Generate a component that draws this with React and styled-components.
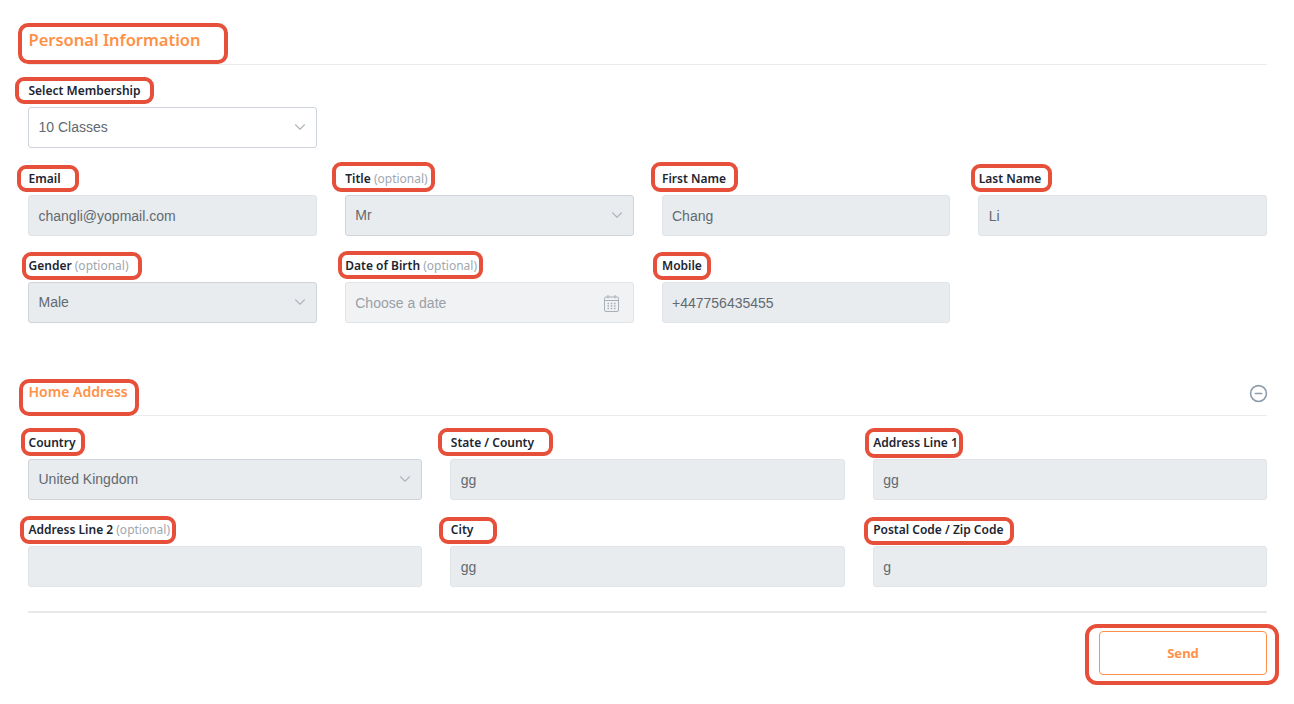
import styled, { createGlobalStyle } from "styled-components";
import { ChevronDown, CircleMinus } from "lucide-react";

const GlobalStyle = createGlobalStyle`
  html, body {
    margin: 0;
    padding: 0;
    background: #fff;
  }
`;

// review marks drawn over the form
const rings = [
  { x: 18, y: 23, w: 210, h: 41, r: 10 },
  { x: 15, y: 77, w: 139, h: 27 },
  { x: 17, y: 165, w: 62, h: 27 },
  { x: 332, y: 162, w: 103, h: 30 },
  { x: 651, y: 162, w: 87, h: 30 },
  { x: 971, y: 164, w: 81, h: 28 },
  { x: 22, y: 252, w: 120, h: 28 },
  { x: 338, y: 251, w: 145, h: 28 },
  { x: 653, y: 252, w: 58, h: 28 },
  { x: 19, y: 379, w: 120, h: 37, r: 10 },
  { x: 21, y: 428, w: 64, h: 28 },
  { x: 438, y: 428, w: 115, h: 28 },
  { x: 865, y: 428, w: 98, h: 30 },
  { x: 20, y: 516, w: 156, h: 28 },
  { x: 439, y: 517, w: 58, h: 27 },
  { x: 864, y: 517, w: 150, h: 28 },
  { x: 1085, y: 624, w: 194, h: 61, r: 12 },
];

const Page = styled.div`
  position: relative;
  box-sizing: border-box;
  width: 1294px;
  height: 704px;
  padding: 24px 27px 0 28px;
  overflow: hidden;
  font-family: "Noto Sans", "Open Sans", sans-serif;
`;

const SectionHead = styled.div`
  display: flex;
  justify-content: space-between;
  align-items: flex-start;
  height: ${({ $height }) => $height}px;
  border-bottom: 1px solid #e9ebee;
  margin-bottom: ${({ $gap }) => $gap}px;
`;

const Heading = styled.h2`
  margin: 0 0 0 0.5px;
  font-size: ${({ $size }) => $size}px;
  line-height: ${({ $line }) => $line}px;
  font-weight: 600;
  color: #ff9147;
`;

const CollapseIcon = styled(CircleMinus)`
  width: 19px;
  height: 19px;
  margin: 6.5px -0.8px 0 0;
  color: #8d9cab;
`;

const Grid = styled.div`
  display: grid;
  grid-template-columns: repeat(${({ $cols }) => $cols}, 1fr);
  column-gap: 28px;
  row-gap: ${({ $rowGap }) => $rowGap}px;
  margin-bottom: ${({ $bottom }) => $bottom || 0}px;
`;

const Field = styled.div`
  min-width: 0;
`;

const Label = styled.label`
  display: block;
  height: 18px;
  margin-bottom: 8px;
  padding-left: 0.5px;
  font-size: 12px;
  line-height: 20px;
  font-weight: 600;
  color: #1c2530;
  white-space: nowrap;
`;

const Optional = styled.span`
  font-weight: 400;
  color: #a0a7af;
`;

const Control = styled.div`
  box-sizing: border-box;
  display: flex;
  align-items: center;
  justify-content: space-between;
  height: 41px;
  padding: ${({ $select }) => ($select ? "0 10px 1px 9.5px" : "1px 10px 0 9.5px")};
  border: 1px solid ${({ $select }) => ($select ? "#ced4da" : "#e0e3e7")};
  border-radius: 3px;
  background: ${({ $tone }) =>
    $tone === "white" ? "#fff" : $tone === "light" ? "#f0f2f4" : "#e9ecef"};
  font-family: "Liberation Sans", Arial, sans-serif;
  font-size: 14px;
  color: ${({ $tone }) => ($tone === "light" ? "#9a9fa6" : "#62696f")};
`;

const Chevron = styled(ChevronDown)`
  width: 18px;
  height: 18px;
  margin-right: -3px;
  color: #b0b6bd;
  stroke-width: 1.5;
`;

const CalendarSvg = styled.svg`
  width: 15px;
  height: 17px;
  margin-right: 4px;
`;

const Divider = styled.hr`
  margin: 0 0 18px;
  border: 0;
  border-top: 2px solid #e6e8ea;
`;

const Actions = styled.div`
  display: flex;
  justify-content: flex-end;
`;

const SendButton = styled.button`
  width: 168px;
  height: 44px;
  border: 1px solid #ff9147;
  border-radius: 4px;
  background: #fff;
  font-family: "Noto Sans", "Open Sans", sans-serif;
  font-size: 13px;
  font-weight: 700;
  color: #ff9147;
`;

const Ring = styled.div`
  position: absolute;
  box-sizing: border-box;
  left: ${({ $x }) => $x}px;
  top: ${({ $y }) => $y}px;
  width: ${({ $w }) => $w}px;
  height: ${({ $h }) => $h}px;
  border: 4px solid #e6503a;
  border-radius: ${({ $r }) => $r || 9}px;
  pointer-events: none;
`;

const CalendarIcon = () => (
  <CalendarSvg viewBox="0 0 15 17" fill="none" stroke="#a9afb6" strokeWidth="1">
    <rect x="0.5" y="2" width="14" height="14.5" rx="1.5" />
    <path d="M.5 5.5h14M4 0v3.4M11 0v3.4" />
    <path d="M3.5 8.5h1.5M6.8 8.5h1.5M10 8.5h1.5M3.5 11h1.5M6.8 11h1.5M10 11h1.5M3.5 13.5h1.5M6.8 13.5h1.5M10 13.5h1.5" strokeWidth="1.4" />
  </CalendarSvg>
);

const FormField = ({ label, optional, value, select, tone, icon }) => (
  <Field>
    <Label>
      {label} {optional && <Optional>(optional)</Optional>}
    </Label>
    <Control $select={select} $tone={tone}>
      <span>{value}</span>
      {select && <Chevron />}
      {icon}
    </Control>
  </Field>
);

export default function App() {
  return (
    <Page>
      <GlobalStyle />

      <SectionHead $height={40} $gap={16.4}>
        <Heading $size={16.5} $line={32}>Personal Information</Heading>
      </SectionHead>

      <Grid $cols={4} $rowGap={20.5} $bottom={54}>
        <FormField label="Select Membership" value="10 Classes" select tone="white" />
        <span />
        <span />
        <span />
        <FormField label="Email" value="changli@yopmail.com" />
        <FormField label="Title" optional value="Mr" select />
        <FormField label="First Name" value="Chang" />
        <FormField label="Last Name" value="Li" />
        <FormField label="Gender" optional value="Male" select />
        <FormField label="Date of Birth" optional value="Choose a date" tone="light" icon={<CalendarIcon />} />
        <FormField label="Mobile" value="+447756435455" />
      </Grid>

      <SectionHead $height={38} $gap={17}>
        <Heading $size={14} $line={30}>Home Address</Heading>
        <CollapseIcon />
      </SectionHead>

      <Grid $cols={3} $rowGap={20} $bottom={24}>
        <FormField label="Country" value="United Kingdom" select />
        <FormField label="State / County" value="gg" />
        <FormField label="Address Line 1" value="gg" />
        <FormField label="Address Line 2" optional value="" />
        <FormField label="City" value="gg" />
        <FormField label="Postal Code / Zip Code" value="g" />
      </Grid>

      <Divider />

      <Actions>
        <SendButton>Send</SendButton>
      </Actions>

      {rings.map((ring) => (
        <Ring key={`${ring.x}-${ring.y}`} $x={ring.x} $y={ring.y} $w={ring.w} $h={ring.h} $r={ring.r} />
      ))}
    </Page>
  );
}
